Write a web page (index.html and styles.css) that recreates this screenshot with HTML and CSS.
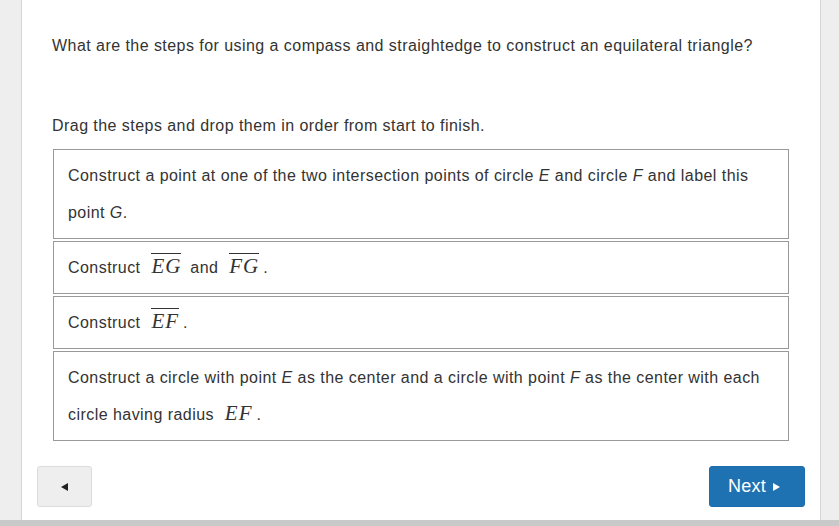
FILE: index.html
```html
<!DOCTYPE html>
<html lang="en">
<head>
<meta charset="utf-8">
<title>Equilateral triangle construction</title>
<link rel="stylesheet" href="styles.css">
</head>
<body>
<div class="page">
  <div class="frame">
    <div class="gutter gutter-left"></div>
    <main class="main">
      <p class="question">What are the steps for using a compass and straightedge to construct an equilateral triangle?</p>
      <p class="instruction">Drag the steps and drop them in order from start to finish.</p>
      <ul class="steps">
        <li class="step">Construct a point at one of the two intersection points of circle <i>E</i> and circle <i>F</i> and label this point <i>G</i>.</li>
        <li class="step">Construct <span class="math"><span class="bar">EG</span></span> and <span class="math"><span class="bar">FG</span></span>.</li>
        <li class="step">Construct <span class="math"><span class="bar">EF</span></span>.</li>
        <li class="step">Construct a circle with point <i>E</i> as the center and a circle with point <i>F</i> as the center with each circle having radius <span class="math">EF</span>.</li>
      </ul>
      <div class="nav">
        <button class="btn btn-prev" type="button" aria-label="Previous">
          <svg width="7" height="8" viewBox="0 0 7 8"><polygon points="7,0 7,8 0,4" fill="#222"/></svg>
        </button>
        <button class="btn btn-next" type="button">Next
          <svg width="7" height="8" viewBox="0 0 7 8"><polygon points="0,0 7,4 0,8" fill="#fff"/></svg>
        </button>
      </div>
    </main>
    <div class="gutter gutter-right"></div>
  </div>
  <div class="bottom"></div>
</div>
</body>
</html>
```
FILE: styles.css
```css
html, body {
  margin: 0;
  padding: 0;
  background: #fff;
}
body {
  font-family: "Liberation Sans", Arial, sans-serif;
  color: #333;
  width: 839px;
  height: 526px;
  overflow: hidden;
}
.page {
  display: flex;
  flex-direction: column;
  height: 526px;
}
.frame {
  display: flex;
  height: 520px;
}
.gutter {
  background: #eeeeee;
}
.gutter-left {
  width: 21px;
  border-right: 1px solid #d6d6d6;
}
.gutter-right {
  width: 18px;
  border-left: 1px solid #d6d6d6;
}
.main {
  flex: 1;
  padding: 36px 0 0 0;
  box-sizing: border-box;
  display: flex;
  flex-direction: column;
}
.question, .instruction {
  margin: 0 0 0 30px;
  font-size: 16px;
  line-height: 20px;
  letter-spacing: 0.45px;
}
.question {
  margin-bottom: 60px;
}
.instruction {
  margin-bottom: 13px;
}
.steps {
  list-style: none;
  margin: 0 0 0 31px;
  padding: 0;
  width: 736px;
  display: flex;
  flex-direction: column;
  gap: 2px;
}
.step {
  border: 1px solid #999;
  padding: 7px 14px;
  font-size: 16px;
  line-height: 37px;
  letter-spacing: 0.45px;
  background: #fff;
}
.step i {
  font-style: italic;
}
.math {
  font-family: "Liberation Serif", "Times New Roman", serif;
  font-style: italic;
  font-size: 21px;
  line-height: 1;
  letter-spacing: 1px;
  margin: 0 4px 0 6px;
}
.bar {
  border-top: 1px solid #333;
}
.nav {
  display: flex;
  justify-content: space-between;
  margin: 25px 15px 0 15px;
}
.btn {
  height: 41px;
  border-radius: 3px;
  font-family: "Liberation Sans", Arial, sans-serif;
  display: flex;
  align-items: center;
  justify-content: center;
  cursor: pointer;
}
.btn-prev {
  width: 55px;
  background: #eeeeee;
  border: 1px solid #dcdcdc;
}
.btn-next {
  width: 96px;
  background: #1f72b2;
  border: 1px solid #1d6cab;
  color: #fff;
  font-size: 18px;
  letter-spacing: 0.3px;
  gap: 7px;
  padding: 0 6px 0 0;
}
.bottom {
  height: 6px;
  background: #c9c9c9;
}
```
